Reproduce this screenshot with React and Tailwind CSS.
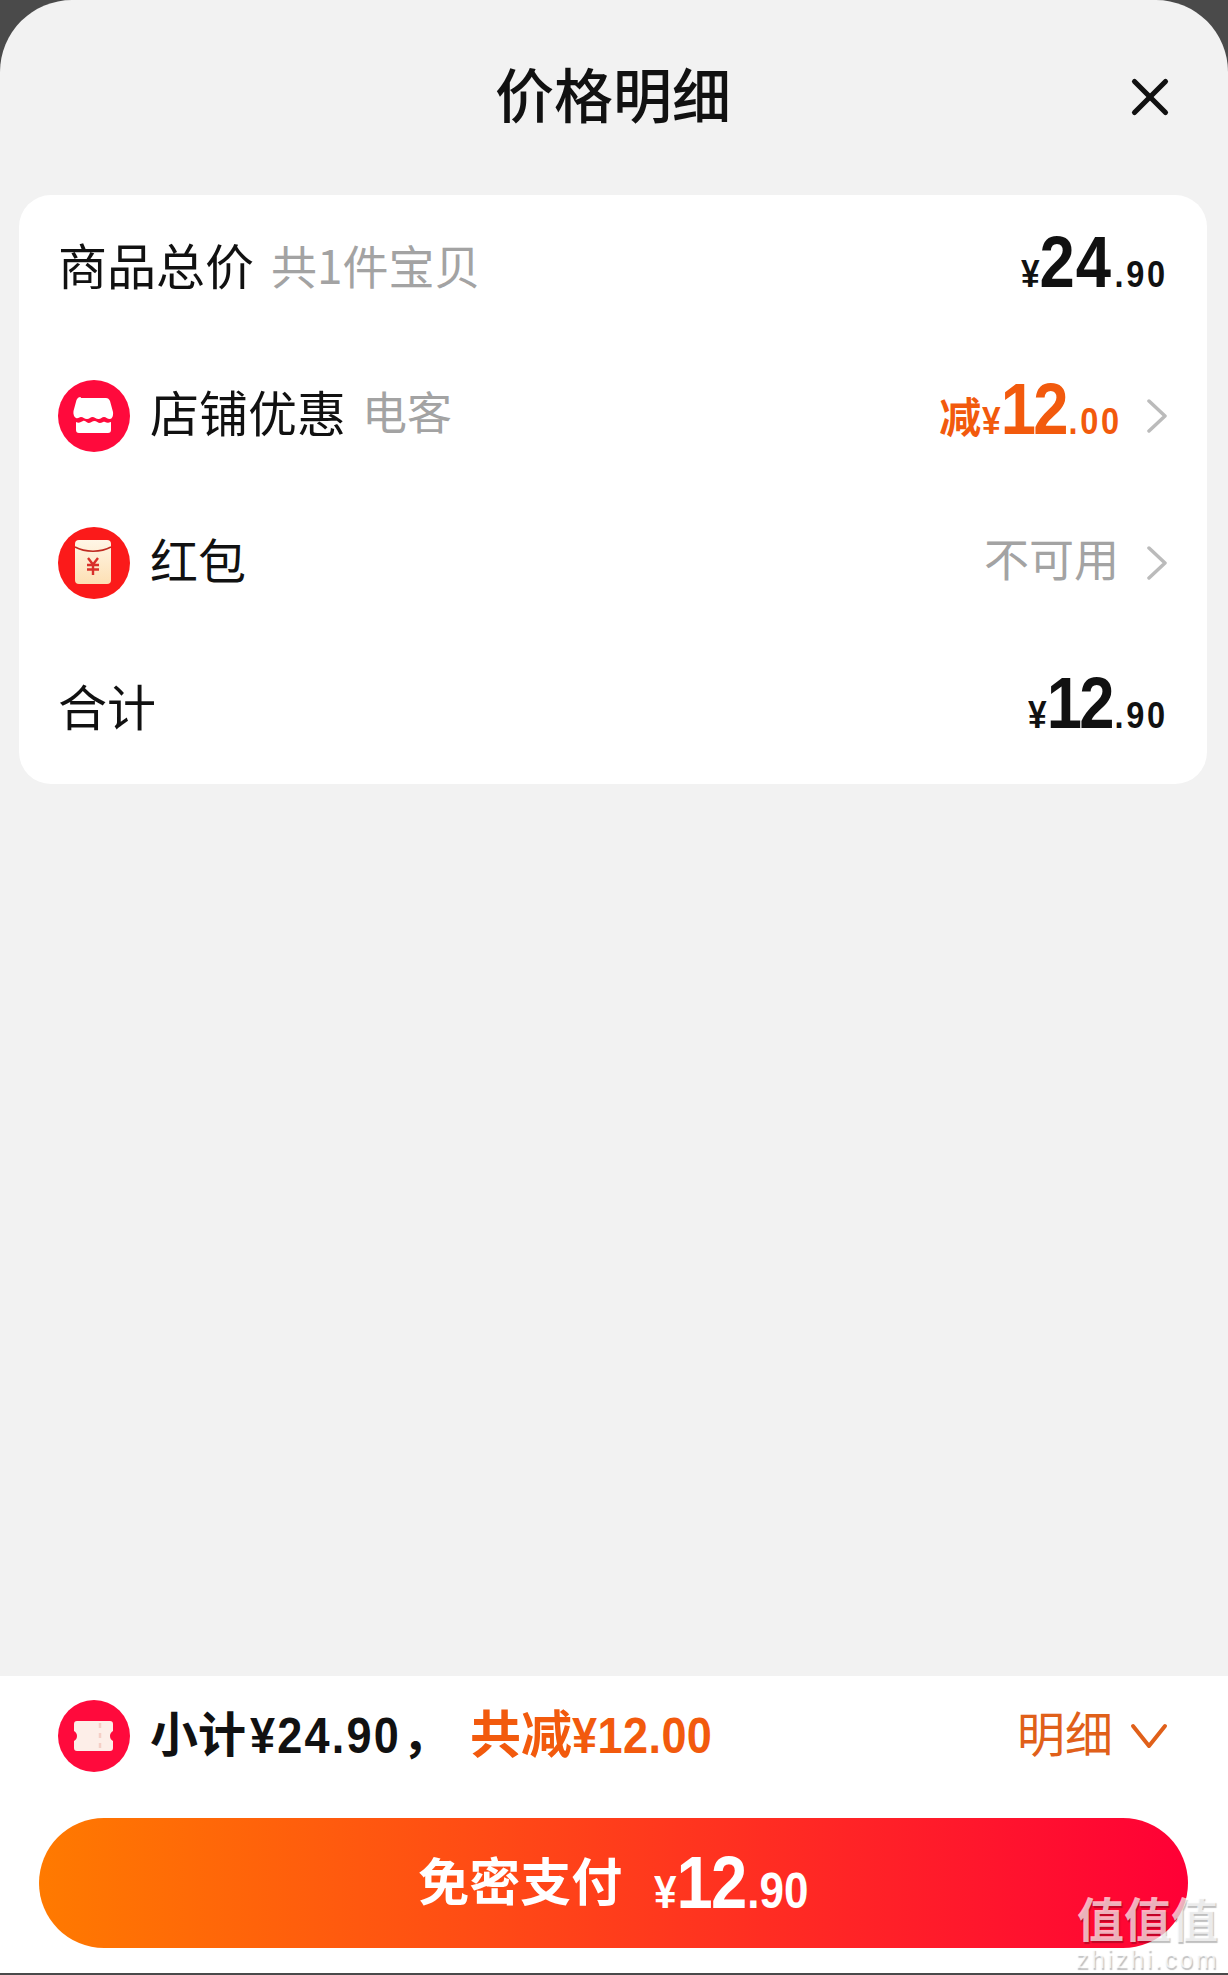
import React from 'react';
import { X } from 'lucide-react';

const cjk = "font-['Noto_Sans_CJK_SC','Noto_Sans',sans-serif]";
const num = "font-['Liberation_Sans','Noto_Sans_CJK_SC',sans-serif]";

// price made of a small yen sign, a big integer part and small decimals, squeezed to look like a condensed face
function Price({ yuan, cents, color = 'text-[#111111]' }) {
  return (
    <span className={`mb-[14px] flex origin-right scale-x-[.88] items-baseline font-bold ${num} ${color}`}>
      <span className="text-[38px] leading-none">¥</span>
      <span className={yuan === '12' ? 'text-[72px] leading-none tracking-[-3px]' : 'text-[72px] leading-none tracking-[1px]'}>{yuan}</span>
      <span className="ml-[3px] text-[37px] leading-none tracking-[3px]">.{cents}</span>
    </span>
  );
}

function Label({ children, className = 'text-[49px] text-[#111111]' }) {
  return <span className={`mb-[10px] leading-none ${className}`}>{children}</span>;
}

function Arrow() {
  return (
    <svg viewBox="0 0 22 34" className="ml-[27px] h-[34px] w-[22px]" fill="none" stroke="#bbbbbb" strokeWidth="3.500" strokeLinecap="round" strokeLinejoin="round">
      <path d="M3 2l16 15L3 32" />
    </svg>
  );
}

function StoreIcon() {
  return (
    <svg viewBox="0 0 72 72" className="h-[72px] w-[72px] shrink-0">
      <circle cx="36" cy="36" r="36" fill="#ff0a3c" />
      <path d="M23 18h25c2 0 3 1 4 3l3 11c.5 4-1 7-3 7-3 0-4-2-6-2s-3 2-5.500 2-4-2-6-2-3 2-5.500 2-4-2-6-2-3 2-5 1c-2-1-3-4-2.500-7l3-11c1-2 2-3 4-3z" fill="#fff" />
      <path d="M18 42c3 1.500 5 0 7-1s3.500 2 5.500 2 4-2 6-2 3.500 2 5.500 2 3-2 5-1 3 1 6 0v8c0 2-1 3-3 3H21c-2 0-3-1-3-3z" fill="#fff" />
    </svg>
  );
}

function EnvelopeIcon() {
  return (
    <svg viewBox="0 0 72 72" className="h-[72px] w-[72px] shrink-0">
      <defs>
        <linearGradient id="env" x1="0" y1="0" x2="0" y2="1">
          <stop offset="0" stopColor="#fff6e6" />
          <stop offset="1" stopColor="#fde0b4" />
        </linearGradient>
      </defs>
      <circle cx="36" cy="36" r="36" fill="#fb1a1a" />
      <rect x="17" y="13" width="36" height="44" rx="4" fill="url(#env)" />
      <path d="M17 20c10 5.500 26 5.500 36 0" fill="none" stroke="#c02a20" strokeWidth="1.500" />
      <path d="M30 31l5 6.500 5-6.500M29 38h12M29 42.500h12M35 37v11" fill="none" stroke="#d8302a" strokeWidth="2.400" />
    </svg>
  );
}

function TicketIcon() {
  return (
    <svg viewBox="0 0 72 72" className="h-[72px] w-[72px] shrink-0">
      <circle cx="36" cy="36" r="36" fill="#ff0a3c" />
      <path d="M19 21h33c2 0 3 1 3 3v7c-2 1-3 3-3 5s1 4 3 5v7c0 2-1 3-3 3H19c-2 0-3-1-3-3v-7c2-1 3-3 3-5s-1-4-3-5v-7c0-2 1-3 3-3z" fill="#fdeee8" />
      <path d="M42 23v26" stroke="#f5cfc6" strokeWidth="2.500" strokeDasharray="5 5" />
    </svg>
  );
}

function Row({ children }) {
  return <div className="flex h-[147px] items-center justify-between pl-[39px] pr-[39px]">{children}</div>;
}

export default function App() {
  return (
    <div className={`relative h-[1975px] overflow-hidden bg-[#4a4a4a] ${cjk}`}>
      <div className="flex h-[1973px] flex-col rounded-t-[72px] bg-[#f2f2f2]">
        {/* header */}
        <div className="relative flex h-[195px] shrink-0 justify-center pt-[57px] pr-[2px]">
          <h1 className="text-[59px] font-medium leading-[72px] text-[#111111]">价格明细</h1>
          <X className="absolute left-[1119px] top-[66px] h-[62px] w-[62px] text-[#111111]" strokeWidth={2} />
        </div>

        {/* card */}
        <div className="ml-[19px] mr-[21px] rounded-[32px] bg-white pb-[1px]">
          <Row>
            <div className="flex items-center">
              <Label>商品总价</Label>
              <Label className="ml-[17px] text-[46px] text-[#a3a3a3]">共1件宝贝</Label>
            </div>
            <Price yuan="24" cents="90" />
          </Row>
          <Row>
            <div className="flex items-center">
              <StoreIcon />
              <Label className="ml-[20px] text-[49px] text-[#111111]">店铺优惠</Label>
              <Label className="ml-[16px] text-[45px] text-[#a3a3a3]">电客</Label>
            </div>
            <div className="flex items-center">
              <span className="-mr-[3px] flex items-center text-[#f25a0d]">
                <span className="-mr-[18px] mb-[2px] text-[42px] font-bold leading-none">减</span>
                <Price yuan="12" cents="00" color="text-[#f25a0d]" />
              </span>
              <Arrow />
            </div>
          </Row>
          <Row>
            <div className="flex items-center">
              <EnvelopeIcon />
              <Label className="ml-[20px] text-[48px] text-[#111111]">红包</Label>
            </div>
            <div className="flex items-center">
              <Label className="text-[45px] text-[#a3a3a3]">不可用</Label>
              <Arrow />
            </div>
          </Row>
          <Row>
            <Label>合计</Label>
            <Price yuan="12" cents="90" />
          </Row>
        </div>

        {/* bottom bar */}
        <div className="mt-auto bg-white">
          <div className="flex h-[120px] items-center justify-between pl-[58px] pr-[60px]">
            <div className="flex items-center font-bold">
              <TicketIcon />
              <Label className="ml-[20px] text-[48px] text-[#111111]">小计</Label>
              <span className={`ml-[4px] -mr-[16px] origin-left scale-x-[.9] text-[50px] leading-none tracking-[2.500px] text-[#111111] ${num}`}>¥24.90</span>
              <Label className="w-[68px] text-[48px] text-[#111111]">，</Label>
              <Label className="text-[51px] text-[#f25a0d]">共减</Label>
              <span className={`origin-left scale-x-[.9] text-[50px] leading-none tracking-[.5px] text-[#f25a0d] ${num}`}>¥12.00</span>
            </div>
            <div className="flex items-center">
              <Label className="text-[48px] text-[#e0601a]">明细</Label>
              <svg viewBox="0 0 38 28" className="ml-[17px] h-[28px] w-[38px]" fill="none" stroke="#e0601a" strokeWidth="4" strokeLinecap="round" strokeLinejoin="round">
                <path d="M3 4l16 20L35 4" />
              </svg>
            </div>
          </div>
          <div className="mb-[25px] ml-[39px] mr-[40px] mt-[22px] flex h-[130px] items-center justify-center rounded-full bg-linear-to-r/srgb from-[#ff7a00] to-[#ff0036] pl-[21px] text-white">
            <span className="mb-[8px] text-[51px] font-bold leading-none">免密支付</span>
            <span className={`ml-[32px] flex origin-left scale-x-[.88] items-baseline font-bold ${num}`}>
              <span className="text-[46px] leading-none">¥</span>
              <span className="text-[74px] leading-none tracking-[-2px]">12</span>
              <span className="ml-[2px] text-[50px] leading-none">.90</span>
            </span>
          </div>
        </div>
      </div>

      {/* watermark */}
      <div className="absolute right-[9px] top-[1886px] flex flex-col items-center text-white/70 [text-shadow:1px_2px_1px_rgba(0,0,0,0.25)]">
        <span className="text-[47px] font-bold leading-[62px]">值值值</span>
        <span className="font-['Liberation_Sans',sans-serif] text-[25px] leading-[22px] tracking-[2.500px]">zhizhi.com</span>
      </div>
    </div>
  );
}
